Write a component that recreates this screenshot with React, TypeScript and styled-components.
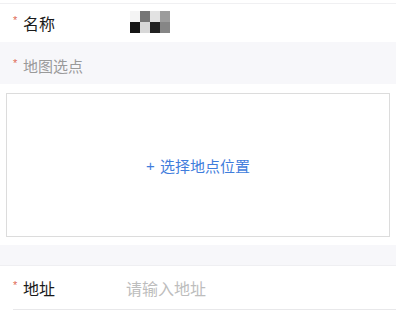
import React from "react";
import styled, { createGlobalStyle } from "styled-components";

const Global = createGlobalStyle`
  html, body { margin: 0; padding: 0; background: #ffffff; }
  body { font-family: "Noto Sans CJK SC", "Noto Sans", sans-serif; }
  * { box-sizing: border-box; }
`;

const Page = styled.div`
  width: 396px;
  display: flex;
  flex-direction: column;
  background: #ffffff;
`;

const TopEdge = styled.div`
  height: 4px;
  background: #ffffff;
  border-bottom: 1px solid #f0f0f2;
`;

const FieldRow = styled.div<{ $h: number; $line?: boolean }>`
  height: ${(p) => p.$h}px;
  display: flex;
  align-items: center;
  padding-left: 13px;
  background: #ffffff;
  position: relative;
  ${(p) =>
    p.$line
      ? `&::after { content: ""; position: absolute; left: 13px; right: 0; bottom: 0; height: 1px; background: #e8e8ea; }`
      : ""}
`;

const Star = styled.span`
  color: #e06a55;
  font-size: 11px;
  width: 10px;
  line-height: 1;
  align-self: center;
  margin-top: -5px;
  font-family: "Liberation Sans", sans-serif;
`;

const Label = styled.span<{ $muted?: boolean }>`
  font-size: ${(p) => (p.$muted ? 15 : 16)}px;
  color: ${(p) => (p.$muted ? "#9a9a9a" : "#1a1a1a")};
  width: ${(p) => (p.$muted ? "auto" : "103px")};
  line-height: 1;
`;

const Placeholder = styled.span`
  font-size: 16px;
  color: #bdbdbd;
  line-height: 1;
`;

const SectionHead = styled.div`
  height: 42px;
  background: #f7f7fa;
  display: flex;
  align-items: center;
  padding-left: 13px;
  padding-top: 5px;
`;

const MapWrap = styled.div`
  background: #ffffff;
  padding: 9px 6px 8px 6px;
`;

const MapBox = styled.button`
  width: 384px;
  height: 144px;
  border: 1.5px solid #dcdcdc;
  background: #ffffff;
  display: flex;
  align-items: center;
  justify-content: center;
  gap: 5px;
  color: #3f7ddc;
  font-family: "Noto Sans CJK SC", sans-serif;
  font-size: 15px;
  padding: 0;
  padding-top: 1px;
  cursor: pointer;
`;

const Plus = styled.span`
  font-family: "Liberation Sans", sans-serif;
  font-size: 15px;
`;

const Gap = styled.div`
  height: 21px;
  background: #f7f7fa;
  border-bottom: 1px solid #efeff2;
`;

const Mosaic = styled.svg`
  display: block;
  margin-left: 4px;
  margin-top: -2px;
`;

const cells: string[][] = [
  ["#f4f4f4", "#767676", "#e2e2e2", "#9c9c9c"],
  ["#151515", "#d8d8d8", "#222222", "#868686"],
];

export default function App() {
  return (
    <Page>
      <Global />
      <TopEdge />
      <FieldRow $h={38}>
        <Star>*</Star>
        <Label>名称</Label>
        <Mosaic width="40" height="22" viewBox="0 0 40 22">
          {cells.map((row, r) =>
            row.map((c, i) => (
              <rect key={`${r}-${i}`} x={i * 10} y={r * 11} width="10" height="11" fill={c} />
            ))
          )}
        </Mosaic>
      </FieldRow>
      <SectionHead>
        <Star>*</Star>
        <Label $muted>地图选点</Label>
      </SectionHead>
      <MapWrap>
        <MapBox>
          <Plus>+</Plus>
          <span>选择地点位置</span>
        </MapBox>
      </MapWrap>
      <Gap />
      <FieldRow $h={44} $line>
        <Star>*</Star>
        <Label>地址</Label>
        <Placeholder>请输入地址</Placeholder>
      </FieldRow>
    </Page>
  );
}
